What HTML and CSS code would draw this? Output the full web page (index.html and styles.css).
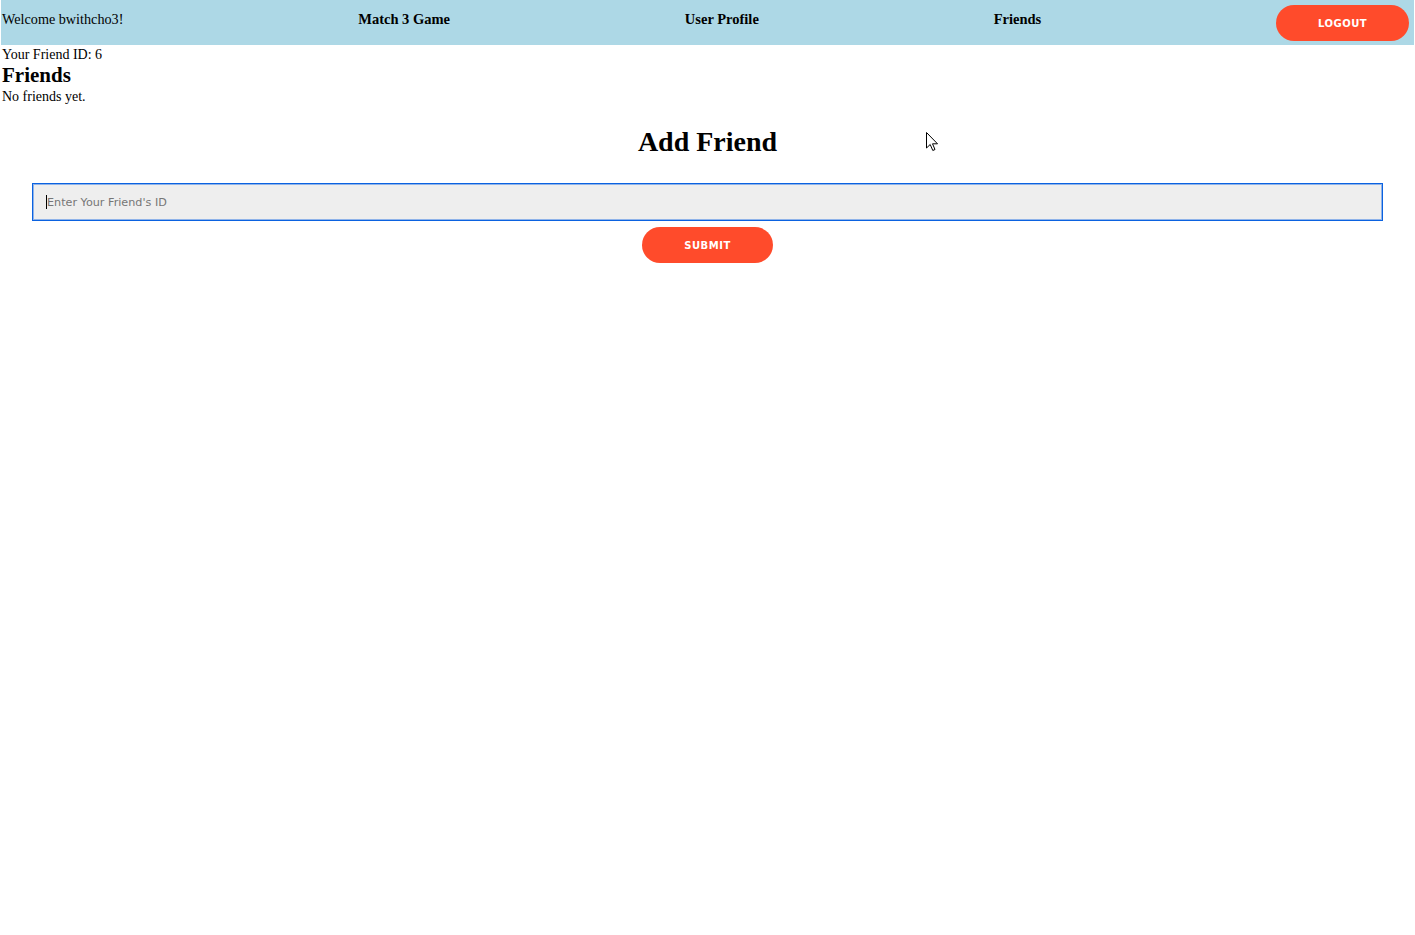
FILE: index.html
```html
<!DOCTYPE html>
<html lang="en">
<head>
<meta charset="utf-8">
<title>Friends</title>
<link rel="stylesheet" href="styles.css">
</head>
<body>
<nav class="topnav">
  <span class="nav-welcome">Welcome bwithcho3!</span>
  <a class="nav-link" href="#">Match 3 Game</a>
  <a class="nav-link" href="#">User Profile</a>
  <a class="nav-link" href="#">Friends</a>
  <button class="pill-btn logout">Logout</button>
</nav>
<main class="page">
  <p class="id-line">Your Friend ID: 6</p>
  <h2 class="section-title">Friends</h2>
  <p class="empty-line">No friends yet.</p>
  <section class="add-friend">
    <h1 class="add-title">Add Friend</h1>
    <form class="add-form">
      <div class="input-box"><span class="caret"></span><span class="placeholder">Enter Your Friend's ID</span></div>
      <button type="button" class="pill-btn submit">Submit</button>
    </form>
  </section>
</main>
<svg class="mouse-cursor" width="13" height="20" viewBox="0 0 13 20" aria-hidden="true">
  <path d="M0.5 0.5 L0.5 16 L4.2 12.5 L6.8 18.5 L9 17.5 L6.5 11.8 L11.5 11.8 Z" fill="#fff" stroke="#000" stroke-width="1" stroke-linejoin="miter"/>
</svg>
</body>
</html>
```
FILE: styles.css
```css
html, body {
  margin: 0;
  padding: 0;
  background: #fff;
}
body {
  font-family: "Liberation Serif", "Times New Roman", serif;
  font-size: 14px;
  color: #000;
  position: relative;
  min-height: 935px;
}
.topnav {
  display: flex;
  justify-content: space-between;
  align-items: flex-start;
  height: 45px;
  background: #add8e6;
  padding: 0 5px 0 1px;
  margin: 0 1px 0 1px;
  box-sizing: border-box;
}
.nav-welcome {
  font-size: 14.2px;
  line-height: 16px;
  padding-top: 11px;
}
.nav-link {
  font-size: 14.5px;
  font-weight: bold;
  color: #000;
  text-decoration: none;
  line-height: 16px;
  padding-top: 11px;
}
.pill-btn {
  background: #ff4b2b;
  color: #fff;
  border: none;
  border-radius: 20px;
  font-family: "DejaVu Sans", Verdana, sans-serif;
  font-weight: bold;
  font-size: 10px;
  letter-spacing: 0.5px;
  text-transform: uppercase;
  height: 36px;
  padding: 0;
  cursor: pointer;
}
.logout {
  width: 133px;
  margin-top: 5px;
}
.page {
  padding: 0 2px;
}
.id-line {
  margin: 2px 0 0;
}
.section-title {
  margin: 0;
  font-size: 21px;
  line-height: 24px;
}
.empty-line {
  margin: 2px 0 0;
}
.add-friend {
  padding: 0 30px;
}
.add-title {
  text-align: center;
  font-size: 28px;
  line-height: 32px;
  margin: 21px 0 25px;
}
.add-form {
  display: flex;
  flex-direction: column;
  align-items: center;
  gap: 6px;
}
.input-box {
  align-self: stretch;
  height: 38px;
  box-sizing: border-box;
  background: #eee;
  border: 1px solid #0b62e0;
  box-shadow: inset 0 0 0 1px rgba(26, 107, 226, 0.45);
  display: flex;
  align-items: center;
  padding-left: 13px;
}
.caret {
  width: 1px;
  height: 14px;
  background: #000;
}
.placeholder {
  font-family: "DejaVu Sans", Verdana, sans-serif;
  font-size: 11.2px;
  color: #767676;
}
.submit {
  width: 131px;
}
.mouse-cursor {
  position: absolute;
  left: 926px;
  top: 132px;
}
```
